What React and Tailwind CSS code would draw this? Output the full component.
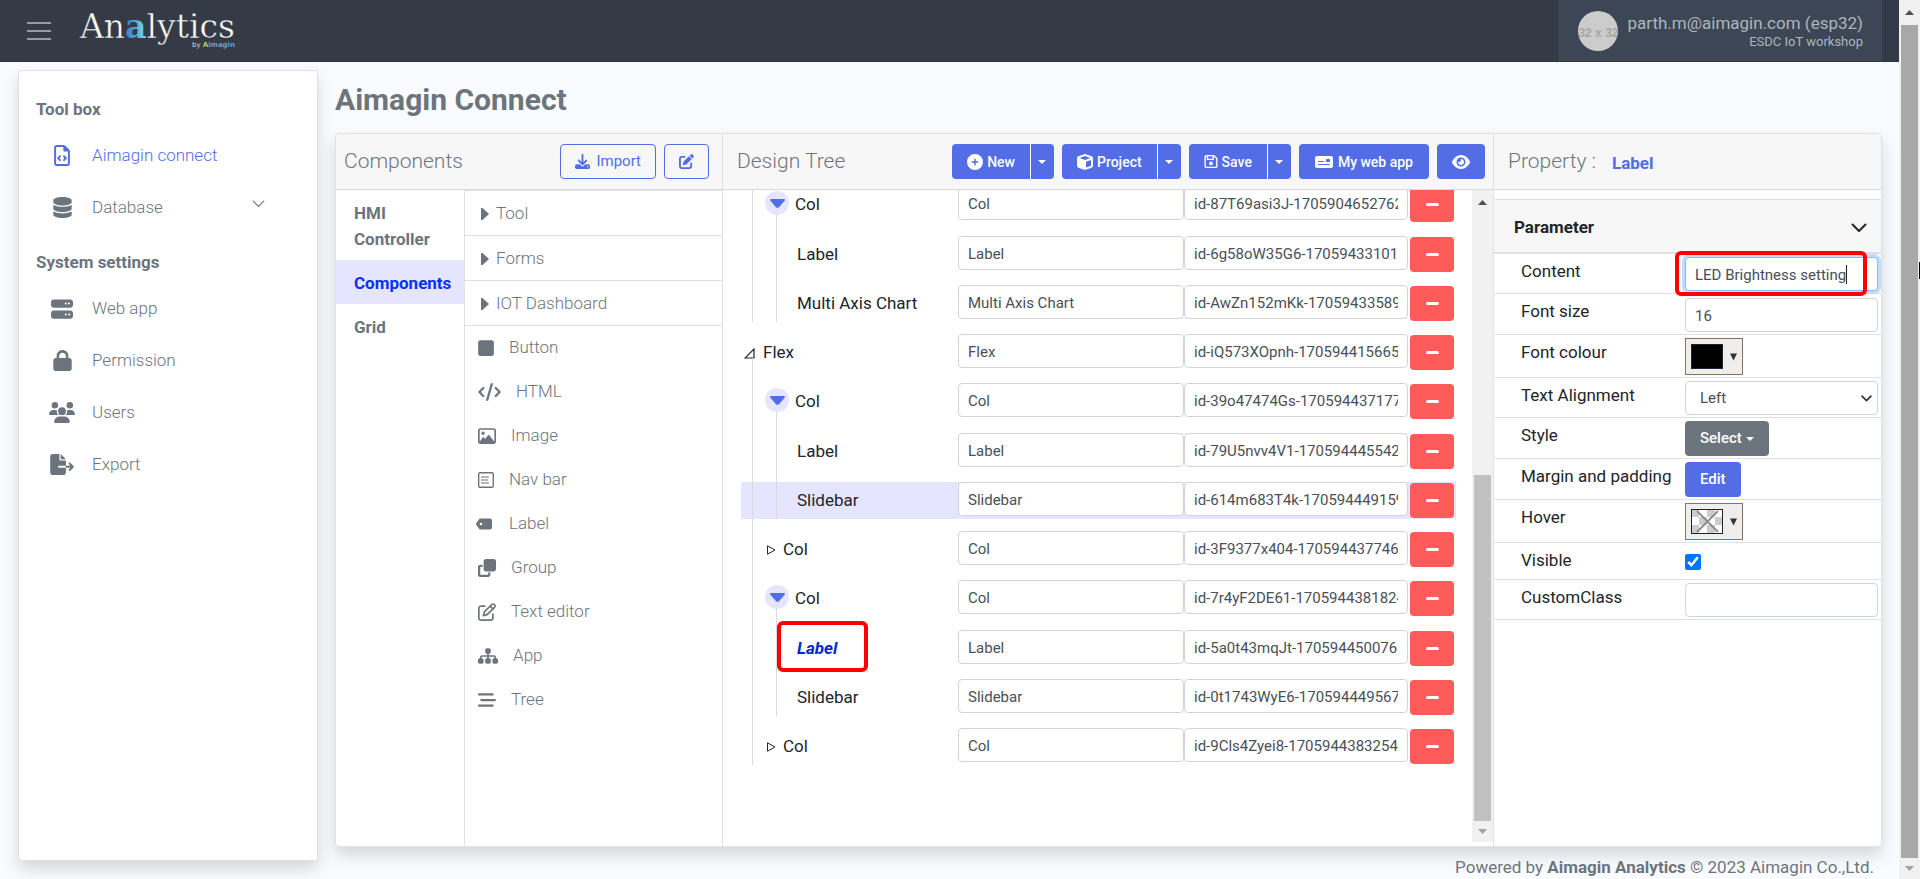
import { useState } from 'react';
import clsx from 'clsx';
import {
    FaBarsStaggered, FaCirclePlus, FaClone, FaCode, FaCube, FaDatabase, FaDownload, FaEye, FaFileExport,
    FaLock, FaMoneyCheck, FaPenToSquare, FaRegFileCode, FaRegFloppyDisk, FaRegImage, FaRegPenToSquare,
    FaServer, FaSitemap, FaSquare, FaUsers,
} from 'react-icons/fa6';

const menu = [
    {
        title: 'Tool box',
        items: [
            { label: 'Aimagin connect', icon: <FaRegFileCode className="h-[21px] w-4" />, active: true },
            { label: 'Database', icon: <FaDatabase className="h-[21px] w-[19px]" />, more: true },
        ],
    },
    {
        title: 'System settings',
        items: [
            { label: 'Web app', icon: <FaServer className="h-[22px] w-[22px]" /> },
            { label: 'Permission', icon: <FaLock className="h-[21px] w-[19px]" /> },
            { label: 'Users', icon: <FaUsers className="h-[21px] w-[26px]" /> },
            { label: 'Export', icon: <FaFileExport className="h-[21px] w-6" /> },
        ],
    },
];

const NavBarIcon = () => (
    <svg viewBox="0 0 16 16" className="h-4 w-4" fill="none" stroke="currentColor">
        <rect x="0.7" y="0.7" width="14.6" height="14.6" rx="1.4" strokeWidth="1.4" />
        <path d="M3 5h8M3 8h7M3 11h8" strokeWidth="1.1" />
    </svg>
);

const TagIcon = () => (
    <svg viewBox="0 0 16 16" className="-ml-[2px] mr-[2px] h-4 w-4" fill="currentColor">
        <path fillRule="evenodd" d="M4.6 2.5H14A2 2 0 0 1 16 4.5v7a2 2 0 0 1-2 2H4.6a2 2 0 0 1-1.5-.7L.4 9.1a1.7 1.7 0 0 1 0-2.2l2.7-3.7a2 2 0 0 1 1.5-.7zM5 6.7a1.3 1.3 0 1 0 0 2.6 1.3 1.3 0 0 0 0-2.6z" />
    </svg>
);

const components = [
    { label: 'Button', icon: <FaSquare className="h-[18px] w-4" /> },
    { label: 'HTML', icon: <FaCode className="h-[18px] w-[23px]" /> },
    { label: 'Image', icon: <FaRegImage className="h-[18px] w-[18px]" /> },
    { label: 'Nav bar', icon: <NavBarIcon /> },
    { label: 'Label', icon: <TagIcon /> },
    { label: 'Group', icon: <FaClone className="h-[18px] w-[18px]" /> },
    { label: 'Text editor', icon: <FaRegPenToSquare className="h-[18px] w-[18px]" /> },
    { label: 'App', icon: <FaSitemap className="h-[18px] w-5" /> },
    { label: 'Tree', icon: <FaBarsStaggered className="h-[18px] w-[18px]" /> },
];

const tree = [
    { name: 'Col', kind: 'open', id: 'id-87T69asi3J-1705904652762' },
    { name: 'Label', kind: 'leaf', id: 'id-6g58oW35G6-1705943310155' },
    { name: 'Multi Axis Chart', kind: 'leaf', id: 'id-AwZn152mKk-17059433589' },
    { name: 'Flex', kind: 'root', id: 'id-iQ573XOpnh-170594415665' },
    { name: 'Col', kind: 'open', id: 'id-39o47474Gs-170594437177' },
    { name: 'Label', kind: 'leaf', id: 'id-79U5nvv4V1-170594445542' },
    { name: 'Slidebar', kind: 'leaf', id: 'id-614m683T4k-170594449159', hovered: true },
    { name: 'Col', kind: 'closed', id: 'id-3F9377x404-170594437746' },
    { name: 'Col', kind: 'open', id: 'id-7r4yF2DE61-1705944381824' },
    { name: 'Label', kind: 'leaf', id: 'id-5a0t43mqJt-1705944500762', selected: true },
    { name: 'Slidebar', kind: 'leaf', id: 'id-0t1743WyE6-170594449567' },
    { name: 'Col', kind: 'closed', id: 'id-9Cls4Zyei8-1705944383254' },
];

const Chevron = ({ className, width = 1.5 }) => (
    <svg viewBox="0 0 16 10" className={className} fill="none" stroke="currentColor" strokeWidth={width} strokeLinecap="round" strokeLinejoin="round">
        <path d="M1.5 1.5L8 8l6.5-6.5" />
    </svg>
);

const Caret = () => (
    <svg viewBox="0 0 8 4" className="h-1 w-2" fill="currentColor"><path d="M0 0h8L4 4z" /></svg>
);

const Logo = () => (
    <a href="#" aria-label="Analytics by Aimagin" className="block">
        <svg width="160" height="52" viewBox="0 0 160 52">
            <defs>
                <linearGradient id="logoA" x1="0" y1="0" x2="1" y2="0">
                    <stop offset="0.3" stopColor="#3f7cc4" />
                    <stop offset="0.36" stopColor="#4fa3d8" />
                    <stop offset="0.42" stopColor="#7fd3e6" />
                </linearGradient>
            </defs>
            <text x="1" y="33" fontFamily="DejaVu Serif" fontSize="33" fill="#ffffff" stroke="#343a46" strokeWidth="0.5">
                An<tspan fill="url(#logoA)" stroke="none" fontWeight="700">a</tspan>lytics
            </text>
            <text x="156" y="42" textAnchor="end" fontFamily="DejaVu Sans" fontSize="7" fill="#d5dbe2">
                by <tspan fill="#b7cf5a" fontWeight="700">A</tspan><tspan fill="#6f9bd1" fontWeight="700">imagin</tspan>
            </text>
        </svg>
    </a>
);

const TopBar = () => (
    <header className="flex h-[62px] shrink-0 items-stretch border-b border-[#2e3344] bg-[#343a46] pr-[17px] pl-[27px]">
        <button type="button" aria-label="Menu" className="flex w-6 flex-col justify-center gap-[6px]">
            <span className="h-[2px] bg-[#989ba1]" />
            <span className="h-[2px] bg-[#989ba1]" />
            <span className="h-[2px] bg-[#989ba1]" />
        </button>
        <div className="ml-7 pt-[5px]"><Logo /></div>
        <div className="ml-auto flex items-center gap-[9px] border-x border-[#414d5d] bg-[#3c4655] pr-[18px] pl-[18px]">
            <div className="flex size-10 items-center justify-center overflow-hidden rounded-full bg-[#cccccc] pt-1 font-[Liberation_Sans] text-xs font-bold whitespace-nowrap text-[#a6a6a6]">
                32 x 32
            </div>
            <div className="pt-[2px] text-right text-[#adb5bd]">
                <div className="text-[17px] leading-5">parth.m@aimagin.com (esp32)</div>
                <div className="text-[13px] leading-[18px]">ESDC IoT workshop</div>
            </div>
        </div>
    </header>
);

const Sidebar = () => (
    <nav className="mt-2 mb-[18px] ml-[18px] w-[300px] shrink-0 rounded-l border border-[#dee2e6] bg-white pt-[25px] shadow-[0_8px_16px_rgba(0,0,0,0.15)]">
        {menu.map((group) => (
            <div key={group.title} className="mb-4">
                <h2 className="pl-[17px] text-[17px] leading-[26px] font-bold">{group.title}</h2>
                <ul className="pt-[7px]">
                    {group.items.map((item) => (
                        <li key={item.label}>
                            <a href="#" className={clsx('flex h-[52px] items-center pt-px pr-[52px] pl-[30px] text-[17px] font-light', item.active && 'text-[#536de6]')}>
                                <span className="mr-[17px] flex w-[26px] justify-center">{item.icon}</span>
                                {item.label}
                                {item.more && <Chevron className="mb-2 ml-auto h-2 w-[13px]" />}
                            </a>
                        </li>
                    ))}
                </ul>
            </div>
        ))}
    </nav>
);

const PanelHeader = ({ children }) => (
    <div className="flex h-14 shrink-0 items-center border-b border-[#d6d9dd] bg-[#f7f7f7]">{children}</div>
);

const tabs = ['HMI Controller', 'Components', 'Grid'];

const ComponentsPanel = () => (
    <section className="flex w-[387px] shrink-0 flex-col border-r border-[#dee2e6]">
        <PanelHeader>
            <h2 className="pl-2 text-[21px] font-light">Components</h2>
            <div className="mr-[13px] ml-auto flex gap-2 text-[15px] text-[#536de6]">
                <button type="button" className="flex h-[35px] items-center gap-[6px] rounded border border-[#536de6] px-[14px]">
                    <FaDownload className="size-[15px]" />
                    Import
                </button>
                <button type="button" aria-label="Edit" className="flex h-[35px] w-[45px] items-center justify-center rounded border border-[#536de6]">
                    <FaPenToSquare className="size-[15px]" />
                </button>
            </div>
        </PanelHeader>
        <div className="flex flex-1">
            <div className="w-[129px] border-r border-[#dee2e6]">
                {tabs.map((tab) => (
                    <a
                        key={tab}
                        href="#"
                        className={clsx('block pt-[10px] pr-2 pb-2 pl-[18px] text-[17px] leading-[26px] font-bold', tab === 'Components' && 'bg-[#e5e5ff] text-[#0033ff]')}
                    >
                        {tab}
                    </a>
                ))}
            </div>
            <div className="flex-1 border-t border-[#dee2e6] text-[17px] font-light">
                {['Tool', 'Forms', 'IOT Dashboard'].map((g) => (
                    <button key={g} type="button" className="flex h-[45px] w-full items-center gap-[7px] border-b border-[#dee2e6] pt-[2px] pl-4 text-left">
                        <svg viewBox="0 0 8 12" className="h-3 w-2" fill="currentColor"><path d="M0 0h1.5L8 6l-6.5 6H0z" /></svg>
                        {g}
                    </button>
                ))}
                <ul>
                    {components.map((c) => (
                        <li key={c.label} className="flex h-11 items-center gap-[15px] pl-[13px]">
                            {c.icon}
                            {c.label}
                        </li>
                    ))}
                </ul>
            </div>
        </div>
    </section>
);

const SplitButton = ({ icon, label }) => (
    <div className="flex h-[35px] overflow-hidden rounded-sm bg-[#536de6]">
        <button type="button" className="flex items-center gap-1 px-[15px]">{icon}{label}</button>
        <button type="button" aria-label={`${label} options`} className="flex w-6 items-center justify-center border-l border-white"><Caret /></button>
    </div>
);

const ScrollBar = ({ className, thumb, children }) => (
    <div className={clsx('flex flex-col items-center bg-[#f1f1f1]', className)}>
        <svg viewBox="0 0 9 5" className="my-[10px] h-[5px] w-[9px] shrink-0" fill="#505050"><path d="M0 5h9L4.500 0z" /></svg>
        {children}
        <div className={clsx('w-[17px]', thumb)} />
        <svg viewBox="0 0 9 5" className="my-2 h-[5px] w-[9px] shrink-0" fill="#a3a3a3"><path d="M0 0h9L4.500 5z" /></svg>
    </div>
);

const input = 'h-[34px] rounded border border-[#ced4da] bg-white px-[9px] pt-[2px] text-[15px] text-[#495057]';

const TreeRow = ({ node }) => (
    <li className={clsx('relative flex h-[37px] items-start', node.kind === 'open' ? 'mb-[13px]' : 'mb-3', node.hovered && 'bg-[#e5e5ff]')}>
        {/* guide lines to parent and children */}
        {node.kind !== 'root' && <span className="absolute -top-[13px] bottom-0 left-[11px] w-px bg-[#d9dbdf]" />}
        {node.kind === 'root' && <span className="absolute top-6 bottom-0 left-[11px] w-px bg-[#d9dbdf]" />}
        {node.kind === 'leaf' && <span className="absolute -top-[13px] bottom-0 left-[35px] w-px bg-[#d9dbdf]" />}
        {node.kind === 'open' && <span className="absolute top-7 bottom-0 left-[35px] w-px bg-[#d9dbdf]" />}

        <div
            className={clsx(
                'flex h-full flex-1 items-center pt-px text-[17px] text-[#212529]',
                node.kind === 'leaf' && 'pl-14',
                node.kind === 'open' && 'pl-6',
                node.kind === 'closed' && 'pl-[26px]',
                node.kind === 'root' && 'pl-[3px]',
            )}
        >
            {node.kind === 'open' && (
                <span className="mr-[6px] mb-1 flex size-6 items-center justify-center rounded-full bg-[#e5e5ff] text-[#536de6]">
                    <svg viewBox="0 0 15 9" className="h-[9px] w-[15px]" fill="currentColor"><path d="M.5 0h14L15 1.200 9 8.200q-1.500 1.300-3 0L0 1.200z" /></svg>
                </span>
            )}
            {node.kind === 'closed' && (
                <svg viewBox="0 0 9 10" className="mr-[7px] h-[10px] w-[9px]" fill="none" stroke="currentColor"><path d="M.5.8L8 5 .5 9.200z" /></svg>
            )}
            {node.kind === 'root' && (
                <svg viewBox="0 0 11 11" className="mr-2 h-[11px] w-[11px]" fill="none" stroke="currentColor" strokeWidth="1.200"><path d="M10 1v9H1z" /></svg>
            )}
            {node.selected ? (
                <span className="relative font-bold text-[#0029cc] italic">
                    {node.name}
                    <span className="absolute -top-[15px] -left-5 h-[51px] w-[91px] rounded-md border-4 border-[#ff0000]" />
                </span>
            ) : node.name}
        </div>
        <input aria-label={`${node.name} name`} defaultValue={node.name} className={clsx(input, 'w-[226px]')} />
        <input aria-label={`${node.name} id`} defaultValue={node.id} className={clsx(input, 'mr-[2px] w-[224px]')} />
        <button type="button" aria-label="Remove" className="mt-px mr-[2px] flex h-[35px] w-11 items-center justify-center rounded-sm bg-[#ff5b5b]">
            <span className="h-[3px] w-[13px] rounded-full bg-white" />
        </button>
    </li>
);

const DesignTree = () => (
    <section className="flex min-w-0 flex-1 flex-col">
        <PanelHeader>
            <h2 className="pl-[14px] text-[21px] font-light">Design Tree</h2>
            <div className="mr-2 ml-auto flex gap-2 text-sm font-medium text-white">
                <SplitButton icon={<FaCirclePlus className="size-4" />} label="New" />
                <SplitButton icon={<FaCube className="size-4" />} label="Project" />
                <SplitButton icon={<FaRegFloppyDisk className="h-[15px] w-[14px]" />} label="Save" />
                <button type="button" className="flex h-[35px] items-center gap-[5px] rounded-sm bg-[#536de6] px-4">
                    <FaMoneyCheck className="h-4 w-[18px]" />
                    My web app
                </button>
                <button type="button" aria-label="Preview" className="flex h-[35px] w-12 items-center justify-center rounded-sm bg-[#536de6]">
                    <FaEye className="h-4 w-[18px]" />
                </button>
            </div>
        </PanelHeader>
        <div className="flex min-h-0 flex-1 pb-1">
            <div className="min-w-0 flex-1 overflow-hidden pr-4 pl-[18px]">
                <ul className="-mt-1">
                    {tree.map((node) => <TreeRow key={node.id} node={node} />)}
                </ul>
            </div>
            <ScrollBar className="w-[21px]" thumb="h-[346px] bg-[#c1c1c1]">
                <div className="flex-1" />
            </ScrollBar>
        </div>
    </section>
);

const Row = ({ label, id, children, className }) => (
    <div className={clsx('flex border-b border-[#dee2e6] pt-[3px] pr-[3px] pb-[2px] pl-[27px]', className)}>
        <label htmlFor={id} className="w-[164px] shrink-0 pt-[2px] text-[17px] leading-6">{label}</label>
        <div className="relative flex-1">{children}</div>
    </div>
);

const ColorPicker = ({ id, children }) => (
    <button id={id} type="button" className="flex h-[37px] w-[58px] items-center gap-[7px] border border-[#8f6f56] bg-[#eeeeee] pl-[5px]">
        {children}
        <svg viewBox="0 0 8 8" className="h-2 w-[7px]" fill="#333333"><path d="M0 0h8L4 8z" /></svg>
    </button>
);

const PropertyPanel = () => {
    const [content, setContent] = useState('LED Brightness setting');

    return (
        <section className="flex w-[388px] shrink-0 flex-col border-l border-[#dee2e6]">
            <PanelHeader>
                <h2 className="pl-[14px] text-[21px] font-light">Property :</h2>
                <span className="mt-1 ml-4 text-[17px] font-bold text-[#536de6]">Label</span>
            </PanelHeader>
            <div className="pt-[9px] text-[#212529]">
                <div className="flex h-[55px] items-center border-t border-b-2 border-[#dee2e6] bg-[#f7f7f7] pt-[3px] pr-[14px] pl-5 text-[17px] font-bold">
                    Parameter
                    <Chevron className="ml-auto h-[10px] w-4" width={2} />
                </div>
                <Row label="Content" id="content">
                    <input
                        id="content"
                        value={content}
                        onChange={(e) => setContent(e.target.value)}
                        className="h-[34px] w-full rounded border border-[#80bdff] bg-white px-[9px] pt-[2px] text-[15px] text-[#495057] shadow-[0_0_0_3px_#bfdeff]"
                    />
                    <span className="absolute top-2 left-[161px] h-[19px] w-px bg-[#212529]" />
                    <span className="absolute -top-[6px] -left-[10px] h-[45px] w-48 rounded-md border-4 border-[#ff0000]" />
                </Row>
                <Row label="Font size" id="font-size">
                    <input id="font-size" defaultValue="16" className={clsx(input, 'mt-px w-full')} />
                </Row>
                <Row label="Font colour" id="font-colour">
                    <ColorPicker id="font-colour"><span className="h-[25px] w-8 border border-[#212529] bg-black" /></ColorPicker>
                </Row>
                <Row label="Text Alignment" id="align">
                    <select id="align" className="h-[34px] w-full appearance-none rounded border border-[#ced4da] bg-white px-[14px] text-[15px] text-[#495057]">
                        <option>Left</option>
                        <option>Center</option>
                        <option>Right</option>
                    </select>
                    <Chevron className="pointer-events-none absolute top-[14px] right-[6px] h-[7px] w-[11px] text-[#343a40]" width={2.5} />
                </Row>
                <Row label="Style" id="style">
                    <button id="style" type="button" className="flex h-[35px] items-center gap-1 rounded-sm bg-[#6c757d] px-[15px] text-[15px] font-medium text-white">
                        Select
                        <Caret />
                    </button>
                </Row>
                <Row label="Margin and padding" id="margin">
                    <button id="margin" type="button" className="h-[35px] rounded-sm bg-[#536de6] px-[15px] text-[15px] font-medium text-white">Edit</button>
                </Row>
                <Row label="Hover" id="hover">
                    <ColorPicker id="hover">
                        <svg viewBox="0 0 32 25" className="h-[25px] w-8">
                            <rect width="32" height="25" fill="#ffffff" />
                            <path d="M1 1h7v7H1zM16 1h8v7h-8zM8 8h8v8H8zM24 8h7v8h-7zM1 16h7v8H1zM16 16h8v8h-8z" fill="#cccccc" />
                            <path d="M6 2l21 21M27 2L6 23" stroke="#8c8c8c" strokeWidth="1.800" />
                            <rect x="0.5" y="0.5" width="31" height="24" fill="none" stroke="#222222" />
                        </svg>
                    </ColorPicker>
                </Row>
                <Row label="Visible" id="visible" className="h-[37px]">
                    <input id="visible" type="checkbox" defaultChecked className="mt-2 block size-4 accent-[#0075ff]" />
                </Row>
                <Row label="CustomClass" id="custom-class">
                    <input id="custom-class" className={clsx(input, 'w-full')} />
                </Row>
            </div>
        </section>
    );
};

export default function App() {
    return (
        <div className="relative flex h-screen overflow-hidden bg-[#fafbfe] font-[Roboto,sans-serif] text-[#6c757d]">
            <div className="flex min-w-0 flex-1 flex-col">
                <TopBar />
                <div className="flex min-h-0 flex-1">
                    <Sidebar />
                    <main className="flex min-w-0 flex-1 flex-col pr-[17px] pl-[17px]">
                        <h1 className="pt-[18px] text-[30px] leading-10 font-bold">Aimagin Connect</h1>
                        <div className="mt-[13px] flex min-h-0 flex-1 overflow-hidden rounded border border-[#dee2e6] bg-white shadow-[0_8px_16px_rgba(0,0,0,0.15)]">
                            <ComponentsPanel />
                            <DesignTree />
                            <PropertyPanel />
                        </div>
                        <footer className="h-8 shrink-0 pt-2 pr-2 text-right text-[17px] leading-6">
                            Powered by <b>Aimagin Analytics</b> © 2023 Aimagin Co.,Ltd.
                        </footer>
                    </main>
                </div>
            </div>
            <ScrollBar className="w-[21px] shrink-0" thumb="flex-1 bg-[#a8a8a8]" />
            <span className="absolute top-[262px] right-0 h-[17px] w-px bg-black" />
        </div>
    );
}
